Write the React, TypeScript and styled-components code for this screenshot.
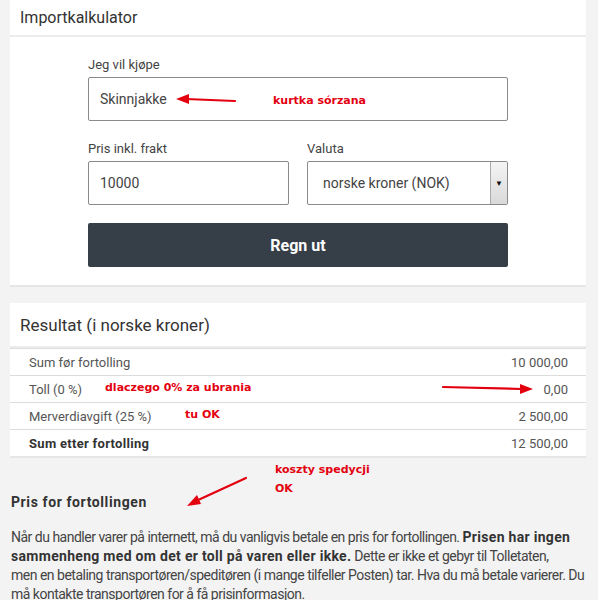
import React from "react";
import styled, { createGlobalStyle } from "styled-components";

const GlobalStyle = createGlobalStyle`
	body {
		margin: 0;
		background: #f3f3f3;
		font-family: Roboto, "Liberation Sans", sans-serif;
		color: #444;
	}
`;

/* page */
const Page = styled.div`
	position: relative;
	width: 598px;
	height: 600px;
	overflow: hidden;
	padding: 0 12px 0 10px;
	box-sizing: border-box;
`;

/* cards */
const Card = styled.section`
	background: #fff;
	box-shadow: 0 2px 0 #e6e6e6;
	margin-bottom: 18px;
`;

const CardHeader = styled.h2<{ $tall?: boolean }>`
	margin: 0;
	height: ${(p) => (p.$tall ? "43px" : "35px")};
	display: flex;
	align-items: center;
	padding: 0 10px;
	font-size: ${(p) => (p.$tall ? "17px" : "16px")};
	font-weight: 400;
	color: #333;
	border-bottom: 2px solid #ececec;
`;

/* form */
const Form = styled.form`
	width: 420px;
	margin: 0 auto;
	padding: 20px 0 18px;
	display: flex;
	flex-direction: column;
	gap: 20px;
`;

const FieldRow = styled.div`
	display: grid;
	grid-template-columns: minmax(0, 1fr) minmax(0, 1fr);
	gap: 18px;
`;

const Field = styled.label`
	display: flex;
	flex-direction: column;
	gap: 5px;
	min-width: 0;
	font-size: 13px;
	color: #444;
	line-height: 15px;
`;

const Input = styled.input`
	height: 44px;
	width: 100%;
	min-width: 0;
	box-sizing: border-box;
	border: 1px solid #8a8a8a;
	border-radius: 2px;
	padding: 0 11px;
	font-family: Roboto, sans-serif;
	font-size: 14px;
	color: #444;
	outline: none;
`;

const Select = styled.div`
	height: 44px;
	box-sizing: border-box;
	border: 1px solid #8a8a8a;
	border-radius: 2px;
	display: flex;
	align-items: center;
	font-size: 14px;
	color: #444;
	overflow: hidden;

	& > span {
		flex: 1;
		padding-left: 15px;
	}
`;

const SelectArrow = styled.div`
	width: 16px;
	height: 100%;
	border-left: 1px solid #aaa;
	background: linear-gradient(#f4f4f4, #d9d9d9);
	display: flex;
	align-items: center;
	justify-content: center;
	font-size: 8px;
	color: #111;
`;

const Button = styled.button`
	height: 44px;
	margin-top: -2px;
	border: none;
	border-radius: 2px;
	background: #363f47;
	color: #fff;
	font-family: Roboto, sans-serif;
	font-size: 16px;
	font-weight: 700;
`;

/* result table */
const Row = styled.div<{ $bold?: boolean }>`
	height: 26px;
	display: flex;
	align-items: center;
	justify-content: space-between;
	padding: 0 18px 0 19px;
	border-top: 1px solid #dcdcdc;
	font-size: 13px;
	color: ${(p) => (p.$bold ? "#333" : "#555")};
	font-weight: ${(p) => (p.$bold ? 700 : 400)};
	letter-spacing: ${(p) => (p.$bold ? "0.3px" : "0")};

	& > span:last-child {
		font-weight: 400;
		color: #555;
		letter-spacing: 0;
	}
`;

/* info text */
const Info = styled.div`
	padding: 20px 1px 0;
	color: #444;

	& > h3 {
		margin: 0 0 18px;
		font-size: 14px;
		letter-spacing: 0.6px;
		color: #333;
	}

	& > p {
		margin: 0;
		font-size: 14px;
		line-height: 19px;
		letter-spacing: -0.5px;
		white-space: nowrap;
	}

	& b {
		color: #333;
		letter-spacing: 0.3px;
	}
`;

/* red annotations drawn over the screenshot */
const Note = styled.span<{ $x: number; $y: number }>`
	position: absolute;
	left: ${(p) => p.$x}px;
	top: ${(p) => p.$y}px;
	color: #e3000f;
	font-family: "DejaVu Sans", sans-serif;
	font-weight: 700;
	font-size: 11px;
	line-height: 19px;
	white-space: nowrap;
`;

const Overlay = styled.svg`
	position: absolute;
	left: 0;
	top: 0;
	pointer-events: none;
`;

const rows = [
	{ label: "Sum før fortolling", value: "10 000,00" },
	{ label: "Toll (0 %)", value: "0,00" },
	{ label: "Merverdiavgift (25 %)", value: "2 500,00" },
	{ label: "Sum etter fortolling", value: "12 500,00", bold: true },
];

export default function App() {
	return (
		<Page>
			<GlobalStyle />
			<Card>
				<CardHeader>Importkalkulator</CardHeader>
				<Form onSubmit={(e) => e.preventDefault()}>
					<Field>
						Jeg vil kjøpe
						<Input defaultValue="Skinnjakke" />
					</Field>
					<FieldRow>
						<Field>
							Pris inkl. frakt
							<Input defaultValue="10000" />
						</Field>
						<Field as="div">
							Valuta
							<Select>
								<span>norske kroner (NOK)</span>
								<SelectArrow>▼</SelectArrow>
							</Select>
						</Field>
					</FieldRow>
					<Button type="submit">Regn ut</Button>
				</Form>
			</Card>

			<Card>
				<CardHeader $tall>Resultat (i norske kroner)</CardHeader>
				{rows.map((r) => (
					<Row key={r.label} $bold={r.bold}>
						<span>{r.label}</span>
						<span>{r.value}</span>
					</Row>
				))}
			</Card>

			<Info>
				<h3>Pris for fortollingen</h3>
				<p>
					Når du handler varer på internett, må du vanligvis betale en pris for fortollingen.{" "}
					<b>
						Prisen har ingen
						<br />
						sammenheng med om det er toll på varen eller ikke.
					</b>{" "}
					Dette er ikke et gebyr til Tolletaten,
					<br />
					men en betaling transportøren/speditøren (i mange tilfeller Posten) tar. Hva du må betale varierer. Du
					<br />
					må kontakte transportøren for å få prisinformasjon.
				</p>
			</Info>

			<Note $x={273} $y={91}>kurtka sórzana</Note>
			<Note $x={105} $y={378}>dlaczego 0% za ubrania</Note>
			<Note $x={185} $y={405}>tu OK</Note>
			<Note $x={275} $y={460}>koszty spedycji</Note>
			<Note $x={275} $y={479}>OK</Note>

			<Overlay width="598" height="600" viewBox="0 0 598 600">
				<g fill="#e3000f" stroke="#e3000f" strokeWidth="2.2" strokeLinecap="round">
					<line x1="235" y1="101" x2="186" y2="99" />
					<polygon points="176,99 189,94 189,104" stroke="none" />
					<line x1="443" y1="387" x2="522" y2="389" />
					<polygon points="533,389 520,384 520,394" stroke="none" />
					<line x1="246" y1="478" x2="196" y2="501" />
					<polygon points="187,506 197,495 201,504" stroke="none" />
				</g>
			</Overlay>
		</Page>
	);
}
